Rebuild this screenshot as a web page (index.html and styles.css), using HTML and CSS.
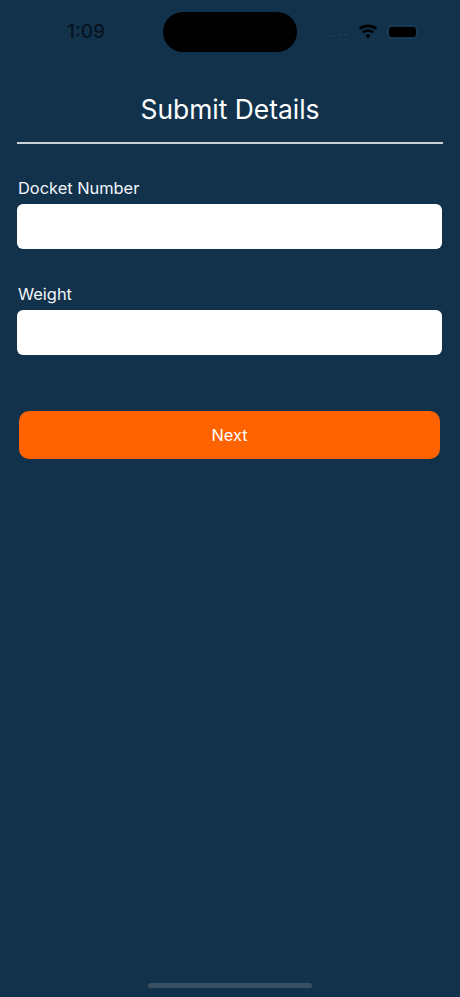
FILE: index.html
```html
<!DOCTYPE html>
<html lang="en">
<head>
<meta charset="utf-8">
<title>Submit Details</title>
<link rel="stylesheet" href="styles.css">
</head>
<body>
<div class="screen">
  <header class="status">
    <span class="time">1:09</span>
    <div class="island"></div>
    <div class="status-icons">
      <svg class="signal" width="24" height="4" viewBox="0 0 24 4"><path d="M1 3h3M6 2.5h3M11 2h4M17 1.5h4" stroke="#2b4a63" stroke-width="1" stroke-dasharray="1 1" fill="none"/></svg>
      <svg class="wifi" width="20" height="15" viewBox="0 0 20 15"><path d="M10 14.6 7.3 11.4a4.2 4.2 0 0 1 5.4 0ZM5.5 9.3 3.9 7.4a9.6 9.6 0 0 1 12.2 0l-1.6 1.9a7 7 0 0 0-9 0ZM2.6 5.9 .9 3.9a14.2 14.2 0 0 1 18.2 0l-1.7 2a11.6 11.6 0 0 0-14.8 0Z" fill="#000"/></svg>
      <div class="battery"><div class="battery-fill"></div></div>
    </div>
  </header>
  <h1 class="title">Submit Details</h1>
  <div class="rule"></div>
  <form class="form">
    <div class="field">
      <label class="label" for="docket">Docket Number</label>
      <input class="input" id="docket" type="text">
    </div>
    <div class="field">
      <label class="label" for="weight">Weight</label>
      <input class="input" id="weight" type="text">
    </div>
    <button class="next" type="button">Next</button>
  </form>
  <div class="spacer"></div>
  <div class="home-bar"></div>
</div>
</body>
</html>
```
FILE: styles.css
```css
* { box-sizing: border-box; }
html, body { margin: 0; padding: 0; height: 100%; }
body { background: #12324c; font-family: Inter, "Liberation Sans", sans-serif; color: #fff; }
.screen { height: 997px; display: flex; flex-direction: column; overflow: hidden; }
.status { height: 64px; padding-top: 12px; display: flex; align-items: flex-start; flex-shrink: 0; position: relative; }
.time { position: absolute; left: 67px; top: 20px; font-size: 19px; line-height: 23px; font-weight: 500; color: #071420; }
.island { width: 134px; height: 40px; margin-left: 163px; border-radius: 20px; background: #000; }
.status-icons { margin-left: 30px; height: 40px; display: flex; align-items: center; }
.signal { margin-right: 7px; margin-top: 5px; }
.wifi { margin-right: 9px; margin-top: -1px; }
.battery { width: 31px; height: 14px; border: 1px solid #1f3f58; border-radius: 5px; padding: 1px; margin-top: -1px; }
.battery-fill { width: 100%; height: 100%; background: #000; border-radius: 3px; }
.title { margin: 0; height: 60px; font-size: 26.4px; line-height: 30px; font-weight: 400; text-align: center; padding-top: 30px; display: flex; align-items: center; justify-content: center; flex-shrink: 0; }
.rule { height: 1.5px; margin: 18px 17px 0 17px; background: #c9d2d9; flex-shrink: 0; }
.form { display: flex; flex-direction: column; padding: 0 18px 0 17px; }
.field { display: flex; flex-direction: column; }
.field:first-child { margin-top: 34.5px; }
.field + .field { margin-top: 35px; }
.label { font-size: 16.4px; line-height: 20px; height: 26px; color: #f2f6f9; padding-left: 1px; }
.input { width: 100%; height: 45px; border: 0; border-radius: 6px; background: #fff; display: block; }
.next { margin: 56px 2px 0; height: 47.5px; border: 0; border-radius: 10px; background: #ff6200; color: #fff; font: 400 16.4px Inter, "Liberation Sans", sans-serif; }
.spacer { flex: 1; }
.home-bar { width: 164px; height: 5px; margin: 0 auto 9px; border-radius: 3px; background: #3a4f61; flex-shrink: 0; }
```
